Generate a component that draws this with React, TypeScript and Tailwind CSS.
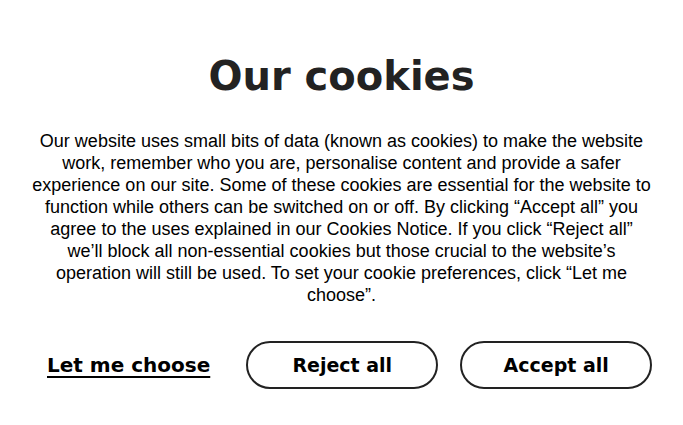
export default function App() {
  return (
    <div className="w-[683px] h-[425px] bg-white flex flex-col items-center text-[#1f1f1f]">
      <h1
        className="mt-[52px] text-[40px] leading-[48px] font-bold text-[#222]"
        style={{ fontFamily: '"DejaVu Sans", sans-serif' }}
      >
        Our cookies
      </h1>
      <p
        className="mt-[30px] w-[619px] text-center text-[18px] leading-[22px] text-black"
        style={{ fontFamily: '"Liberation Sans", Arial, sans-serif' }}
      >
        Our website uses small bits of data (known as cookies) to make the website work, remember who you are,
        personalise content and provide a safer experience on our site. Some of these cookies are essential for the
        website to function while others can be switched on or off. By clicking “Accept all” you agree to the uses
        explained in our Cookies Notice. If you click “Reject all” we’ll block all non-essential cookies but those
        crucial to the website’s operation will still be used. To set your cookie preferences, click “Let me choose”.
      </p>
      <div
        className="mt-[35px] w-full flex items-center pl-[47px]"
        style={{ fontFamily: '"DejaVu Sans", sans-serif' }}
      >
        <button className="text-[20px] font-bold text-black underline underline-offset-4 decoration-2">
          Let me choose
        </button>
        <button className="ml-[36px] w-[192px] h-[48px] rounded-full border-2 border-[#222] text-[19px] font-bold text-black">
          Reject all
        </button>
        <button className="ml-[22px] w-[192px] h-[48px] rounded-full border-2 border-[#222] text-[19px] font-bold text-black">
          Accept all
        </button>
      </div>
    </div>
  );
}
